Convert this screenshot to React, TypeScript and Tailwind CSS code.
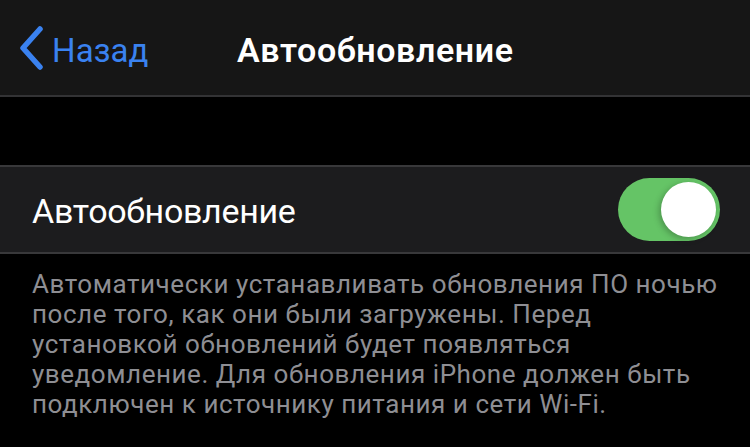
export default function App() {
  return (
    <div
      className="w-[750px] h-[447px] bg-black overflow-hidden flex flex-col"
      style={{ fontFamily: "Roboto, 'Noto Sans', sans-serif" }}
    >
      {/* navigation bar */}
      <div className="relative h-[95px] bg-[#161616] flex items-center pt-[5px] shrink-0">
        <div className="flex items-center pl-[18px] text-[#3a82f0]">
          <svg width="26" height="44" viewBox="0 0 26 44" fill="none" className="-mt-[4px]">
            <path d="M22 3 L5 22 L22 41" stroke="currentColor" strokeWidth="5.5" strokeLinecap="round" strokeLinejoin="round" />
          </svg>
          <span className="ml-[8px] text-[33px] leading-none tracking-[0.1px]">Назад</span>
        </div>
        <div className="absolute left-[237px] top-0 h-full flex items-center pt-[5px] text-white text-[34px] font-semibold leading-none tracking-[0.6px]">
          Автообновление
        </div>
      </div>
      <div className="h-[2px] bg-[#333335] shrink-0" />
      <div className="h-[68px] shrink-0" />
      <div className="h-[2px] bg-[#38383a] shrink-0" />
      {/* toggle row */}
      <div className="h-[85px] bg-[#1c1c1e] flex items-center justify-between pl-[32px] pr-[30px] shrink-0">
        <span className="text-white text-[34px] leading-none tracking-[-0.3px] pt-[2px]">Автообновление</span>
        <div className="w-[102px] h-[63px] rounded-full bg-[#65c466] flex items-center justify-end pr-[4px]">
          <div className="w-[55px] h-[55px] rounded-full bg-white shadow-[-2px_2px_6px_rgba(0,0,0,0.25)]" />
        </div>
      </div>
      <div className="h-[2px] bg-[#38383a] shrink-0" />
      {/* footer note */}
      <div className="pl-[32px] pt-[15px] text-[#8e8e93] text-[26px] leading-[30px] tracking-[0.55px]">
        <div>Автоматически устанавливать обновления ПО ночью</div>
        <div>после того, как они были загружены. Перед</div>
        <div>установкой обновлений будет появляться</div>
        <div>уведомление. Для обновления iPhone должен быть</div>
        <div>подключен к источнику питания и сети Wi-Fi.</div>
      </div>
    </div>
  );
}
